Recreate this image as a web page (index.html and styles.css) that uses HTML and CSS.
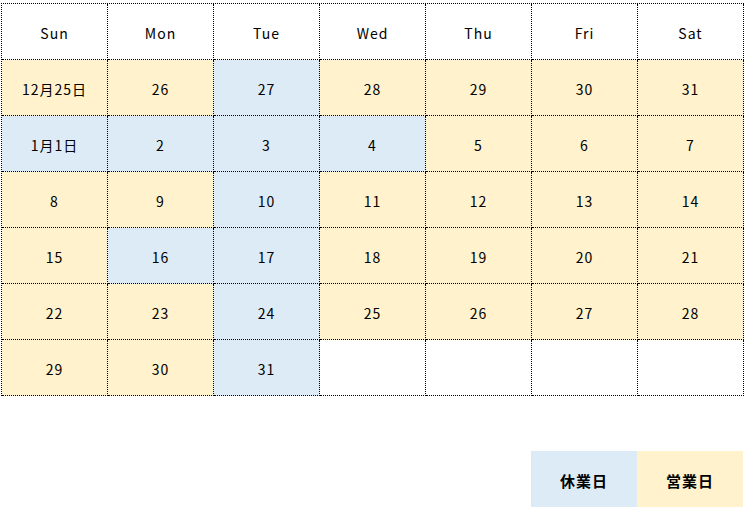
FILE: index.html
```html
<!DOCTYPE html>
<html lang="ja">
<head>
<meta charset="utf-8">
<title>Calendar</title>
<link rel="stylesheet" href="styles.css">
</head>
<body>
<div class="page">
  <div class="cal">
    <div class="cell head">Sun</div>
    <div class="cell head">Mon</div>
    <div class="cell head">Tue</div>
    <div class="cell head">Wed</div>
    <div class="cell head">Thu</div>
    <div class="cell head">Fri</div>
    <div class="cell head">Sat</div>

    <div class="cell open">12月25日</div>
    <div class="cell open">26</div>
    <div class="cell closed">27</div>
    <div class="cell open">28</div>
    <div class="cell open">29</div>
    <div class="cell open">30</div>
    <div class="cell open">31</div>

    <div class="cell closed">1月1日</div>
    <div class="cell closed">2</div>
    <div class="cell closed">3</div>
    <div class="cell closed">4</div>
    <div class="cell open">5</div>
    <div class="cell open">6</div>
    <div class="cell open">7</div>

    <div class="cell open">8</div>
    <div class="cell open">9</div>
    <div class="cell closed">10</div>
    <div class="cell open">11</div>
    <div class="cell open">12</div>
    <div class="cell open">13</div>
    <div class="cell open">14</div>

    <div class="cell open">15</div>
    <div class="cell closed">16</div>
    <div class="cell closed">17</div>
    <div class="cell open">18</div>
    <div class="cell open">19</div>
    <div class="cell open">20</div>
    <div class="cell open">21</div>

    <div class="cell open">22</div>
    <div class="cell open">23</div>
    <div class="cell closed">24</div>
    <div class="cell open">25</div>
    <div class="cell open">26</div>
    <div class="cell open">27</div>
    <div class="cell open">28</div>

    <div class="cell open">29</div>
    <div class="cell open">30</div>
    <div class="cell closed">31</div>
    <div class="cell"></div>
    <div class="cell"></div>
    <div class="cell"></div>
    <div class="cell"></div>
  </div>

  <div class="legend">
    <div class="key closed">休業日</div>
    <div class="key open">営業日</div>
  </div>
</div>
</body>
</html>
```

FILE: styles.css
```css
html, body {
  margin: 0;
  padding: 0;
  background: #ffffff;
}

body {
  font-family: "Noto Sans CJK JP", "DejaVu Sans", sans-serif;
  color: #000000;
}

.page {
  padding: 3px 0 0 1px;
}

.cal {
  display: grid;
  grid-template-columns: repeat(7, 106px);
  grid-auto-rows: 56px;
  width: max-content;
  border-left: 1px dotted #000000;
  border-top: 1px dotted #000000;
}

.cell {
  display: flex;
  align-items: center;
  justify-content: center;
  box-sizing: border-box;
  padding-top: 2px;
  border-right: 1px dotted #000000;
  border-bottom: 1px dotted #000000;
  font-size: 14px;
  font-weight: 400;
  letter-spacing: 1px;
  background: #ffffff;
}

.open {
  background: #fff2cc;
}

.closed {
  background: #ddebf7;
}

.legend {
  display: flex;
  margin: 55px 0 0 530px;
}

.key {
  width: 106px;
  height: 56px;
  box-sizing: border-box;
  padding-top: 2px;
  display: flex;
  align-items: center;
  justify-content: center;
  font-size: 15px;
  font-weight: bold;
  letter-spacing: 1px;
}
```
